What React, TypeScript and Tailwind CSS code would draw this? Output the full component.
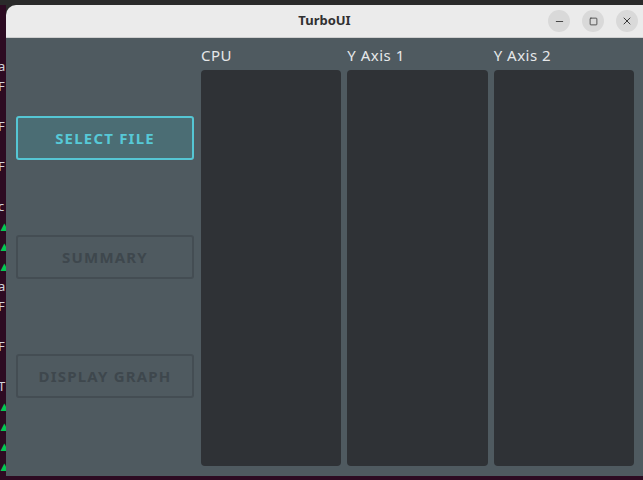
import { Minus, Square, X } from "lucide-react";

const termRows = [
  { y: 58, ch: "a", c: "text-gray-300" },
  { y: 78, ch: "F", c: "text-gray-300" },
  { y: 118, ch: "F", c: "text-gray-300" },
  { y: 158, ch: "F", c: "text-gray-300" },
  { y: 198, ch: "c", c: "text-gray-300" },
  { y: 218, ch: "▲", c: "text-green-500" },
  { y: 238, ch: "▲", c: "text-green-500" },
  { y: 258, ch: "▲", c: "text-green-500" },
  { y: 278, ch: "a", c: "text-gray-300" },
  { y: 298, ch: "F", c: "text-gray-300" },
  { y: 338, ch: "F", c: "text-gray-300" },
  { y: 378, ch: "T", c: "text-gray-300" },
  { y: 398, ch: "▲", c: "text-green-500" },
  { y: 418, ch: "▲", c: "text-green-500" },
  { y: 438, ch: "▲", c: "text-green-500" },
  { y: 458, ch: "▲", c: "text-green-500" },
];

function NavButton({ label, active }: { label: string; active?: boolean }) {
  return (
    <button
      className={
        active
          ? "h-[44px] w-[178px] rounded-[3px] border-2 border-[#55c6d4] bg-[#4b6d74] text-[15px] font-bold tracking-[1.2px] text-[#57c9d7]"
          : "h-[44px] w-[178px] rounded-[3px] border-2 border-[#444d53] bg-transparent text-[15px] font-bold tracking-[1.2px] text-[#3e474d]"
      }
    >
      {label}
    </button>
  );
}

export default function App() {
  return (
    <div className="relative flex h-[480px] w-[643px] flex-col overflow-hidden bg-[#2a2a2a] font-['Noto_Sans',sans-serif]">
      <div className="flex flex-1 pt-[5px]">
        <div className="relative w-[6px] shrink-0 overflow-hidden bg-[#2d0b22]">
          {termRows.map((r) => (
            <span
              key={r.y}
              className={`absolute left-[-2px] text-[13px] leading-[16px] ${r.c}`}
              style={{ top: r.y - 5 }}
            >
              {r.ch}
            </span>
          ))}
        </div>
        <div className="flex flex-1 flex-col overflow-hidden rounded-tl-[10px]">
          <div className="relative flex h-[33px] shrink-0 items-center justify-center border-b border-[#cfcfcf] bg-[#ebebeb]">
            <span className="text-[13px] font-bold text-[#303030]">TurboUI</span>
            <div className="absolute right-[5px] top-[5px] flex gap-[12px]">
              <span className="flex h-[22px] w-[22px] items-center justify-center rounded-full bg-[#d9d9d9] text-[#3a3a3a]">
                <Minus size={11} strokeWidth={2} />
              </span>
              <span className="flex h-[22px] w-[22px] items-center justify-center rounded-full bg-[#d9d9d9] text-[#3a3a3a]">
                <Square size={9} strokeWidth={2.2} />
              </span>
              <span className="flex h-[22px] w-[22px] items-center justify-center rounded-full bg-[#d9d9d9] text-[#3a3a3a]">
                <X size={12} strokeWidth={2} />
              </span>
            </div>
          </div>
          <div className="flex flex-1 bg-[#4f5a60]">
            <div className="flex w-[190px] shrink-0 flex-col gap-[75px] pl-[10px] pt-[78px]">
              <NavButton label="SELECT FILE" active />
              <NavButton label="SUMMARY" />
              <NavButton label="DISPLAY GRAPH" />
            </div>
            <div className="grid flex-1 grid-cols-3 gap-[6px] pb-[10px] pl-[5px] pr-[9px] pt-[7px]">
              {["CPU", "Y Axis 1", "Y Axis 2"].map((t) => (
                <div key={t} className="flex flex-col">
                  <div className="h-[21px] text-[15px] leading-[21px] tracking-[0.5px] text-[#e6e8ea]">{t}</div>
                  <div className="mt-[4px] flex-1 rounded-[4px] bg-[#2f3236]" />
                </div>
              ))}
            </div>
          </div>
        </div>
      </div>
      <div className="h-[4px] shrink-0 bg-[#2d0b22]" />
    </div>
  );
}
